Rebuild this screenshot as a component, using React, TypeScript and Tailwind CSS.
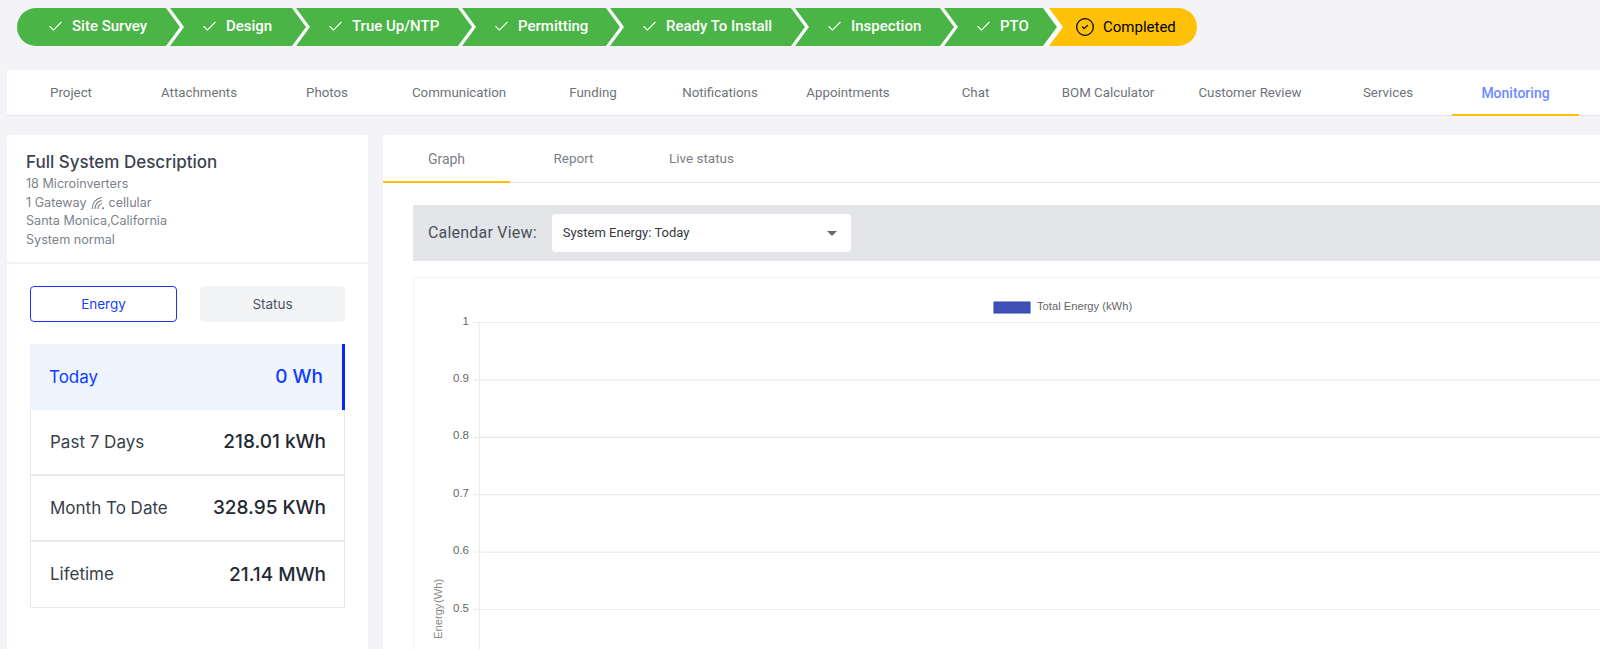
import { Check, CircleCheck } from 'lucide-react';

const steps = [
  { label: 'Site Survey', width: 'w-[163px]', first: true },
  { label: 'Design', width: 'w-[136px]' },
  { label: 'True Up/NTP', width: 'w-[176px]' },
  { label: 'Permitting', width: 'w-[158px]' },
  { label: 'Ready To Install', width: 'w-[195px]' },
  { label: 'Inspection', width: 'w-[159px]' },
  { label: 'PTO', width: 'w-[113px]' },
];

const tabs = [
  { label: 'Project', width: 'w-[128px]' },
  { label: 'Attachments', width: 'w-[128px]' },
  { label: 'Photos', width: 'w-[128px]' },
  { label: 'Communication', width: 'w-[136px]' },
  { label: 'Funding', width: 'w-[132px]' },
  { label: 'Notifications', width: 'w-[122px]' },
  { label: 'Appointments', width: 'w-[134px]' },
  { label: 'Chat', width: 'w-[121px]' },
  { label: 'BOM Calculator', width: 'w-[144px]' },
  { label: 'Customer Review', width: 'w-[140px]' },
  { label: 'Services', width: 'w-[132px] pl-1' },
];

const energyRows = [
  { label: 'Past 7 Days', value: '218.01 kWh' },
  { label: 'Month To Date', value: '328.95 KWh' },
  { label: 'Lifetime', value: '21.14 MWh' },
];

const ticks = ['1', '0.9', '0.8', '0.7', '0.6', '0.5'];

function SignalIcon() {
  return (
    <svg width="14" height="14" viewBox="0 0 13 13" fill="none" stroke="#7d838b" strokeWidth="1.1" className="ml-1 mr-1">
      <circle cx="11.2" cy="11.4" r="1" fill="#7d838b" stroke="none" />
      <path d="M1 12C1.4 6.4 5 2.4 10 1.2" />
      <path d="M3.6 12C3.9 8 6.4 5.1 10 4" />
      <path d="M6.3 12C6.5 9.7 7.8 7.9 10 7" />
    </svg>
  );
}

function EnergyChart() {
  return (
    <svg width="1187" height="372" className="block font-['Liberation_Sans']">
      <rect x="580" y="24" width="36" height="11" fill="#3f51b5" stroke="#2f45b0" />
      <text x="623" y="32" fontSize="11.2" fill="#666666">
        Total Energy (kWh)
      </text>
      <line x1="65.5" y1="44" x2="65.5" y2="372" stroke="#ececec" strokeWidth="1.2" />
      {ticks.map((tick, index) => {
        const y = 44.5 + index * 57.4;
        return (
          <g key={tick}>
            <line x1="59" y1={y} x2="1187" y2={y} stroke="#ececec" strokeWidth="1.2" />
            <text x="55" y={y + 2} textAnchor="end" fontSize="11.5" fill="#666666">
              {tick}
            </text>
          </g>
        );
      })}
      <text transform="translate(27.5 361) rotate(-90)" fontSize="11.2" wordSpacing="-2.5" fill="#888888">
        Energy (Wh)
      </text>
    </svg>
  );
}

export default function App() {
  return (
    <div className="h-[649px] w-full overflow-hidden bg-[#f3f3f8] pt-2 font-[Roboto]">
      <div className="ml-[17px] flex h-[38px] w-fit overflow-hidden rounded-full bg-white">
        {steps.map((step) => (
          <div
            key={step.label}
            className={`flex h-full shrink-0 items-center bg-[#4ab546] pb-px text-[15px] font-medium text-white ${step.width} ${
              step.first
                ? 'pl-[30px] [clip-path:polygon(0_0,calc(100%-14px)_0,100%_50%,calc(100%-14px)_100%,0_100%)]'
                : '-ml-[10px] pl-[31px] [clip-path:polygon(0_0,calc(100%-14px)_0,100%_50%,calc(100%-14px)_100%,0_100%,14px_50%)]'
            }`}
          >
            <Check size={17} strokeWidth={1.5} className="mr-2" />
            {step.label}
          </div>
        ))}
        <div className="-ml-2 flex h-full w-[148px] shrink-0 items-center bg-[#ffc107] pl-[26px] text-[15px] text-black [clip-path:polygon(0_0,100%_0,100%_100%,0_100%,14px_50%)]">
          <CircleCheck size={20} strokeWidth={1.5} className="mr-2" />
          Completed
        </div>
      </div>

      <div className="ml-[7px] mt-6 flex h-[46px] items-stretch border-b border-[#e4e4e8] bg-white pt-px text-[13.3px] text-[#6f7378]">
        {tabs.map((tab) => (
          <div key={tab.label} className={`flex shrink-0 items-center justify-center ${tab.width}`}>
            {tab.label}
          </div>
        ))}
        <div className="-mb-px flex w-[127px] shrink-0 items-center justify-center border-b-2 border-[#ffc107] text-sm font-medium text-[#6d8cff]">
          Monitoring
        </div>
      </div>

      <div className="mt-[19px] flex gap-[15px] pl-[7px]">
        <div className="h-[600px] w-[361px] shrink-0 rounded bg-white font-[Inter]">
          <div className="border-b-2 border-[#f3f3f6] px-[19px] pb-3 pt-[14px]">
            <h2 className="text-[17px] font-medium leading-[26px] text-[#3b4450]">Full System Description</h2>
            <div className="text-[12.6px] leading-[18.67px] text-[#7d838b]">
              <div>18 Microinverters</div>
              <div className="flex items-center">
                1 Gateway
                <SignalIcon />
                cellular
              </div>
              <div>Santa Monica,California</div>
              <div>System normal</div>
            </div>
          </div>

          <div className="px-[23px] pt-[22px]">
            <div className="flex gap-[23px] text-[13.5px]">
              <div className="flex h-9 w-[147px] items-center justify-center rounded-sm border border-[#1a35f0] text-[#1a44f0]">
                Energy
              </div>
              <div className="flex h-9 w-[145px] items-center justify-center rounded-sm bg-[#f3f4f6] text-[#4b5563]">
                Status
              </div>
            </div>

            <div className="mt-[22px] w-[315px]">
              <div className="flex h-[66px] items-center justify-between border-r-[3px] border-[#0a28f0] bg-[#eef5ff] px-[19px] pt-[2px] text-[#0f3cff]">
                <span className="text-[17px]">Today</span>
                <span className="text-[19px] font-medium">0 Wh</span>
              </div>
              {energyRows.map((row) => (
                <div
                  key={row.label}
                  className="flex h-[66px] items-center justify-between border border-t-0 border-b-2 border-[#e8e8ee] pl-[19px] pr-[18px] pt-[2px] text-[#1f2933] last:border-b"
                >
                  <span className="text-[17px] text-[#37414b]">{row.label}</span>
                  <span className="text-[19px] font-medium">{row.value}</span>
                </div>
              ))}
            </div>
          </div>
        </div>

        <div className="h-[600px] min-w-0 flex-1 rounded-tl bg-white">
          <div className="flex h-12 border-b border-[#e2e2e4] text-[13.5px] text-[#7b7f84]">
            <div className="-mb-px flex w-[127px] items-center justify-center border-b-2 border-[#ffc107] pt-px text-sm">Graph</div>
            <div className="flex w-[127px] items-center justify-center">Report</div>
            <div className="flex w-[129px] items-center justify-center">Live status</div>
          </div>

          <div className="pl-[30px] pt-[22px]">
            <div className="flex h-14 items-center bg-[#e4e5e9] pl-[15px]">
              <span className="text-base tracking-[0.2px] text-[#4a5059]">Calendar View:</span>
              <div className="ml-[15px] flex h-[38px] w-[299px] items-center justify-between rounded-sm bg-white pl-[11px] pr-[14px] text-[13px] text-[#333a42]">
                System Energy: Today
                <span className="h-0 w-0 border-x-[5px] border-t-[5px] border-x-transparent border-t-[#666a70]" />
              </div>
            </div>

            <div className="mt-4 border-l border-t border-[#f3f3f3]">
              <EnergyChart />
            </div>
          </div>
        </div>
      </div>
    </div>
  );
}
